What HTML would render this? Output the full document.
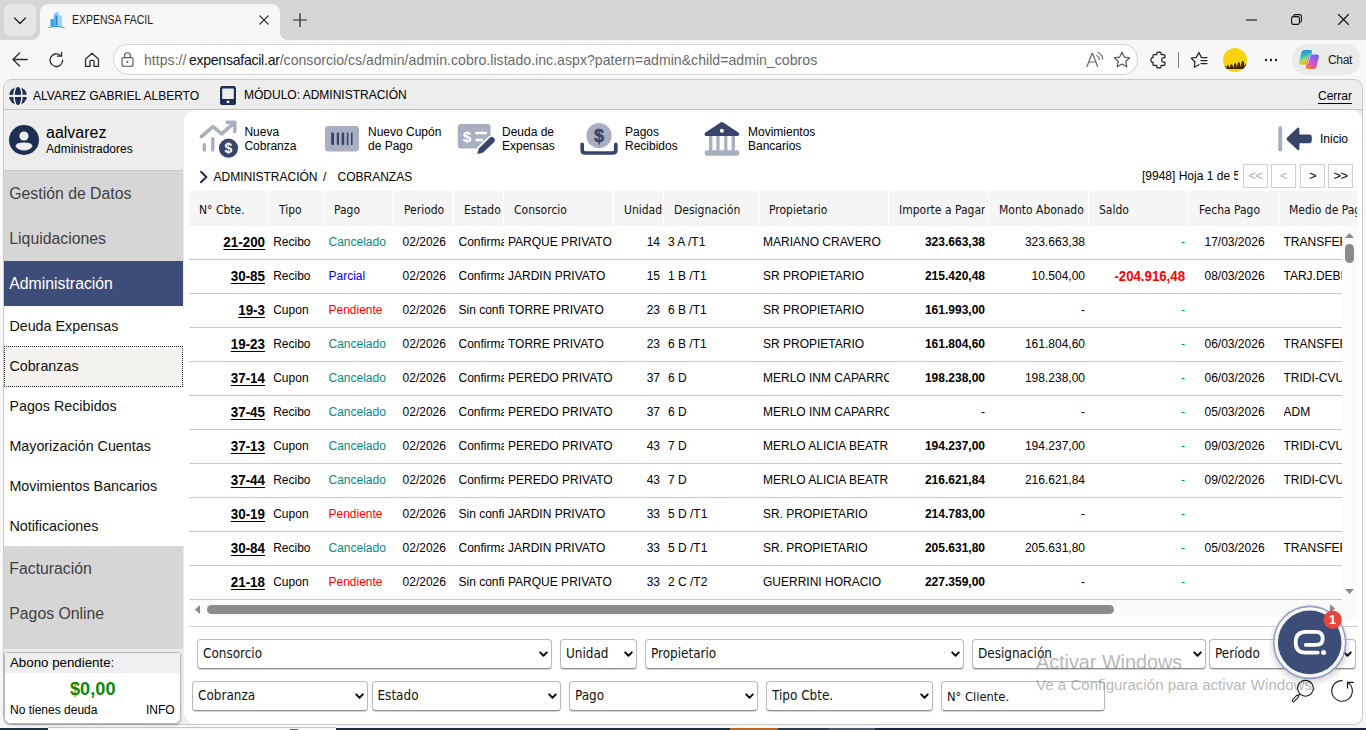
<!DOCTYPE html>
<html lang="es">
<head>
<meta charset="utf-8">
<title>EXPENSA FACIL</title>
<style>
*{box-sizing:border-box;margin:0;padding:0}
html,body{width:1366px;height:730px;overflow:hidden}
body{position:relative;background:#f7f7f7;font-family:"Liberation Sans",Arial,sans-serif;color:#000;font-size:12px}
.abs{position:absolute}
.t{position:absolute;white-space:nowrap;line-height:16px;height:16px}
svg{position:absolute;overflow:visible}
/* ---------- browser chrome ---------- */
#tabstrip{left:0;top:0;width:1366px;height:40px;background:#d5d5d5}
#tabdd{left:4px;top:4px;width:32px;height:32px;border-radius:7px;background:#e6e6e6}
#tab{left:40px;top:4px;width:240px;height:36px;border-radius:8px 8px 0 0;background:#f7f7f7}
#toolbar{left:0;top:40px;width:1366px;height:39px;background:#f7f7f7}
#addr{left:113px;top:44px;width:1025px;height:31px;border-radius:15px;background:#fff;border:1px solid #d4d4d4}
#chat{left:1292px;top:44px;width:68px;height:31px;border-radius:15px;background:#ebebeb}
/* ---------- page ---------- */
#page{left:3px;top:79px;width:1360px;height:646px;background:#ededed;border-radius:9px;border:1px solid #c9c9c9}
#hdr{left:4px;top:80px;width:1358px;height:30px;background:#ededed;border-bottom:1px solid #c2c2c2;border-radius:8px 8px 0 0}
#menu{left:4px;top:170px;width:179px;height:479px;background:#d6d6d6}
#main{left:184px;top:110px;width:1178px;height:614px;background:#fff;border-radius:12px 11px 9px 12px}
#taskbar{left:0;top:728px;width:1366px;height:2px;background:#1a2740}

.m1{font-size:15.8px;color:#3f3f3f;line-height:18px;height:18px}
.m2{font-size:14.3px;color:#111;line-height:18px;height:18px}

.tb{font-size:12px;line-height:14px;height:28px}
.pg{position:absolute;top:164px;width:25px;height:24px;border:1px solid #cfcfcf;background:#fff;text-align:center;font-size:13px;line-height:22px;letter-spacing:-0.5px}

.th{font-size:12px;color:#111;font-family:"DejaVu Sans Condensed","DejaVu Sans",sans-serif;font-stretch:condensed}
.td{font-size:12px}
.b{font-weight:bold}
.nc{font-size:14px;font-weight:bold;transform:scaleX(0.955);transform-origin:100% 50%}
.nc u{text-underline-offset:2px;text-decoration-thickness:1.1px}
.sr{font-size:14px;font-weight:bold;color:#ff0000;transform:scaleX(0.945);transform-origin:100% 50%}
.ln{left:189px;width:1153px;height:1px;background:#c9c9c9}

.sel{position:absolute;height:30px;background:#fff;border:1px solid #b9b9b9;border-bottom-color:#8f8f8f;border-radius:4px;box-shadow:0 1px 1px rgba(0,0,0,.18);font-size:13.4px;line-height:28px;padding-left:5px;white-space:nowrap;color:#111;font-family:"DejaVu Sans Condensed","DejaVu Sans",sans-serif;font-stretch:condensed}
</style>
</head>
<body>
<!-- BROWSER CHROME -->
<div id="tabstrip" class="abs"></div>
<div id="tabdd" class="abs"></div>
<div id="tab" class="abs"></div>
<div class="abs" style="left:32px;top:32px;width:8px;height:8px;background:radial-gradient(circle at 0 0,rgba(247,247,247,0) 7.5px,#f7f7f7 8.5px)"></div><div class="abs" style="left:280px;top:32px;width:8px;height:8px;background:radial-gradient(circle at 100% 0,rgba(247,247,247,0) 7.5px,#f7f7f7 8.5px)"></div>
<div id="toolbar" class="abs"></div>
<div id="addr" class="abs"></div>
<div id="chat" class="abs"></div>

<!-- tab dropdown chevron -->
<svg style="left:13px;top:16px" width="14" height="10" viewBox="0 0 14 10"><path d="M1.5 2 L7 7.5 L12.5 2" fill="none" stroke="#222" stroke-width="1.3" stroke-linecap="round" stroke-linejoin="round"/></svg>
<!-- favicon -->
<svg style="left:48px;top:11px" width="17" height="18" viewBox="0 0 17 18">
<rect x="2.5" y="8" width="3.5" height="7.5" fill="#3aa7e6"/><rect x="6" y="3" width="4.5" height="12.5" fill="#5bbcf0"/><rect x="7.3" y="1" width="3.2" height="3" fill="#8fd0f5"/><rect x="10.5" y="4.5" width="3.5" height="11" fill="#9ad6f7"/><rect x="7.8" y="5" width="1" height="9" fill="#1f78c1"/>
<path d="M0.5 16.3 Q8.5 13.8 16.5 16.3 L16.5 17 Q8.5 15 0.5 17Z" fill="#2d8fd6"/></svg>
<div class="t" style="left:72px;top:12px;font-size:13px;transform:scaleX(0.807);transform-origin:0 50%;color:#1b1b1b" id="tabtitle">EXPENSA FACIL</div>
<svg style="left:259px;top:15px" width="10" height="10" viewBox="0 0 10 10"><path d="M0.8 0.8 L9.2 9.2 M9.2 0.8 L0.8 9.2" stroke="#222" stroke-width="1.2" stroke-linecap="round"/></svg>
<svg style="left:293px;top:13px" width="14" height="14" viewBox="0 0 14 14"><path d="M7 0.5 V13.5 M0.5 7 H13.5" stroke="#222" stroke-width="1.2" stroke-linecap="round"/></svg>
<!-- window controls -->
<svg style="left:1246px;top:19px" width="11" height="2" viewBox="0 0 11 2"><path d="M0 1 H11" stroke="#111" stroke-width="1.1"/></svg>
<svg style="left:1291px;top:14px" width="11" height="11" viewBox="0 0 11 11"><rect x="0.6" y="2.6" width="7.8" height="7.8" rx="1.6" fill="none" stroke="#111" stroke-width="1.1"/><path d="M2.8 2.4 V2 Q2.8 0.6 4.2 0.6 H8.4 Q10.4 0.6 10.4 2.6 V6.8 Q10.4 8.2 9 8.2 H8.6" fill="none" stroke="#111" stroke-width="1.1"/></svg>
<svg style="left:1338px;top:14px" width="11" height="11" viewBox="0 0 11 11"><path d="M0.5 0.5 L10.5 10.5 M10.5 0.5 L0.5 10.5" stroke="#111" stroke-width="1.1" stroke-linecap="round"/></svg>
<!-- nav: back, reload, home -->
<svg style="left:12px;top:52px" width="16" height="15" viewBox="0 0 16 15"><path d="M15.3 7.5 H1.2 M7.6 1 L1 7.5 L7.6 14" fill="none" stroke="#2b2b2b" stroke-width="1.3" stroke-linecap="round" stroke-linejoin="round"/></svg>
<svg style="left:49px;top:52px" width="15" height="16" viewBox="0 0 15 16"><path d="M13.6 8.2 A6.3 6.3 0 1 1 11.4 3.4" fill="none" stroke="#2b2b2b" stroke-width="1.3" stroke-linecap="round"/><path d="M8.4 3.6 H12.6 V-0.2" transform="translate(0,0.6)" fill="none" stroke="#2b2b2b" stroke-width="1.3" stroke-linecap="round" stroke-linejoin="round"/></svg>
<svg style="left:84px;top:52px" width="16" height="16" viewBox="0 0 16 16"><path d="M1.5 7.2 L8 1.2 L14.5 7.2 V14.3 H10 V9.3 Q10 8.3 9 8.3 H7 Q6 8.3 6 9.3 V14.3 H1.5 Z" fill="none" stroke="#2b2b2b" stroke-width="1.3" stroke-linejoin="round"/></svg>
<!-- lock -->
<svg style="left:121px;top:52px" width="13" height="15" viewBox="0 0 13 15"><rect x="1" y="5.6" width="11" height="8.6" rx="2" fill="none" stroke="#555" stroke-width="1.1"/><path d="M3.6 5.6 V3.6 Q3.6 0.8 6.5 0.8 Q9.4 0.8 9.4 3.6 V5.6" fill="none" stroke="#555" stroke-width="1.1"/><circle cx="6.5" cy="9.9" r="1" fill="#555"/></svg>
<div class="t" style="left:144px;top:52px;font-size:14.1px;letter-spacing:0.022px;color:#6a6a6a" id="url">https://<span style="color:#111;margin-left:2.4px;letter-spacing:-0.27px">expensafacil.ar</span>/consorcio/cs/admin/admin.cobro.listado.inc.aspx?patern=admin&amp;child=admin_cobros</div>
<!-- read aloud -->
<svg style="left:1086px;top:51px" width="18" height="17" viewBox="0 0 18 17"><path d="M1 15.5 L6 2.5 H6.6 L11.6 15.5 M2.8 11 H9.8" fill="none" stroke="#666" stroke-width="1.2" stroke-linejoin="round" stroke-linecap="round"/><path d="M10.6 4.6 Q13 5.6 13.6 8.6 M12 1.6 Q16 3.4 16.8 8.2" fill="none" stroke="#666" stroke-width="1.1" stroke-linecap="round"/></svg>
<!-- star -->
<svg style="left:1113px;top:51px" width="18" height="17" viewBox="0 0 18 17"><path d="M9 1.2 L11.3 6.1 L16.7 6.8 L12.7 10.5 L13.8 15.8 L9 13.1 L4.2 15.8 L5.3 10.5 L1.3 6.8 L6.7 6.1 Z" fill="none" stroke="#555" stroke-width="1.2" stroke-linejoin="round"/></svg>
<!-- extensions puzzle -->
<svg style="left:1148px;top:50px" width="20" height="20" viewBox="1148 50 20 20"><path d="M1153.9 54.7 H1156.7 Q1155.9 52.1 1158.9 52.1 Q1161.9 52.1 1161.1 54.7 H1164 Q1164.9 54.7 1164.9 55.6 V57.7 Q1161.7 57.1 1161.7 59.9 Q1161.7 62.7 1164.9 62.1 V64.4 Q1164.9 65.3 1164 65.3 H1161.1 Q1161.9 67.9 1158.9 67.9 Q1155.9 67.9 1156.7 65.3 H1153.9 Q1153 65.3 1153 64.4 V62.1 Q1150.9 62.8 1150.9 59.9 Q1150.9 57 1153 57.7 V55.6 Q1153 54.7 1153.9 54.7Z" fill="none" stroke="#222" stroke-width="1.25" stroke-linejoin="round"/></svg>
<div class="abs" style="left:1178px;top:52px;width:1px;height:16px;background:#7c7c7c"></div>
<!-- favorites -->
<svg style="left:1188px;top:50px" width="22" height="20" viewBox="1188 50 22 20"><path d="M1201.4 57.5 L1198.9 52.5 L1196.3 57.4 L1191.3 58.2 L1195 62 L1194.2 67.2 L1199 64.7" fill="none" stroke="#222" stroke-width="1.25" stroke-linejoin="round" stroke-linecap="round"/><path d="M1201.6 57.5 H1207 M1201 60.5 H1207 M1201 63.5 H1207" stroke="#222" stroke-width="1.25" stroke-linecap="round"/></svg>
<!-- avatar -->
<div class="abs" style="left:1223px;top:48px;width:24px;height:24px;border-radius:12px;background:#f8d410;overflow:hidden"><div class="abs" style="left:1px;top:12px;width:22px;height:9px;background:#3c2606;clip-path:polygon(0 75%,6% 60%,10% 85%,16% 55%,22% 60%,26% 90%,32% 45%,38% 50%,42% 88%,48% 35%,55% 40%,58% 85%,64% 25%,72% 30%,75% 80%,82% 10%,90% 15%,92% 70%,100% 30%,100% 100%,0 100%)"></div></div>
<!-- dots -->
<svg style="left:1264px;top:58px" width="14" height="4" viewBox="0 0 14 4"><circle cx="2" cy="2" r="1.2" fill="#222"/><circle cx="7" cy="2" r="1.2" fill="#222"/><circle cx="12" cy="2" r="1.2" fill="#222"/></svg>
<!-- copilot -->
<svg style="left:1298px;top:49px" width="22" height="21" viewBox="0 0 22 21"><defs><linearGradient id="cp1" x1="0" y1="0" x2="0.3" y2="1"><stop offset="0" stop-color="#2a6fe0"/><stop offset="0.45" stop-color="#2fc0c8"/><stop offset="0.8" stop-color="#c6d84a"/><stop offset="1" stop-color="#f6a623"/></linearGradient><linearGradient id="cp2" x1="0.7" y1="0" x2="0.2" y2="1"><stop offset="0" stop-color="#5b6ff2"/><stop offset="0.45" stop-color="#c252e0"/><stop offset="0.8" stop-color="#f2607a"/><stop offset="1" stop-color="#f58a2e"/></linearGradient></defs>
<path d="M6.6 1 H12.4 Q14.6 1 14 3.2 L11.6 12.4 Q10.8 15.6 7.6 15.6 H3.4 Q0.6 15.6 1.2 12.8 L3.4 3.6 Q4 1 6.6 1Z" fill="url(#cp1)"/><path d="M14.4 5.4 H18.6 Q21.4 5.4 20.8 8.2 L18.6 17.4 Q18 20 15.4 20 H9.6 Q7.4 20 8 17.8 L10.4 8.6 Q11.2 5.4 14.4 5.4Z" fill="url(#cp2)"/><path d="M12.6 6 L10.1 15 L9.4 15 L11.9 6Z" fill="#fff" fill-opacity=".9"/></svg>
<div class="t" style="left:1328px;top:52px;font-size:12px;letter-spacing:-0.3px;color:#222" id="chattxt">Chat</div>

<!-- PAGE -->
<div id="page" class="abs"></div>
<div id="hdr" class="abs"></div>
<div id="menu" class="abs"></div>
<div class="abs" style="left:4px;top:170px;width:179px;height:1px;background:#c9c9c9"></div>
<div id="main" class="abs"></div>
<div id="taskbar" class="abs"></div>
<div class="abs" style="left:0;top:728px;width:48px;height:2px;background:#1d3340"></div><div class="abs" style="left:336px;top:728px;width:394px;height:2px;background:#1b2f3a"></div><div class="abs" style="left:48px;top:727px;width:288px;height:3px;background:#f9f9f9;border-top:1px solid #c4c4c4"></div><div class="abs" style="left:290px;top:729px;width:8px;height:1px;background:#6b4a66"></div><div class="abs" style="left:730px;top:728px;width:48px;height:2px;background:#b96a2a"></div><div class="abs" style="left:778px;top:728px;width:51px;height:2px;background:#2d3a4c"></div><div class="abs" style="left:829px;top:728px;width:46px;height:2px;background:#4d5866"></div>

<!-- header bar -->
<svg style="left:9px;top:87px" width="18" height="18" viewBox="0 0 18 18"><circle cx="9" cy="8.9" r="9" fill="#1f2d50"/><path d="M-1 8.9 H19" stroke="#ededed" stroke-width="2.2"/><ellipse cx="9" cy="8.9" rx="4" ry="10.4" fill="none" stroke="#ededed" stroke-width="1.5"/></svg>
<div class="t" style="left:33px;top:88px;font-size:12px" id="uname">ALVAREZ GABRIEL ALBERTO</div>
<svg style="left:220px;top:86px" width="16" height="19" viewBox="0 0 16 19"><rect x="0" y="0" width="16" height="19" rx="2.6" fill="#1f2d50"/><rect x="2.2" y="2.4" width="11.6" height="10.6" rx="0.5" fill="#ededed"/><rect x="6.7" y="14.7" width="2.6" height="2.4" fill="#ededed"/></svg>
<div class="t" style="left:244px;top:87px;font-size:12px" id="modulo">MÓDULO: ADMINISTRACIÓN</div>
<div class="t" style="left:1318px;top:88px;font-size:12px;text-decoration:underline;text-underline-offset:2.5px" id="cerrar">Cerrar</div>
<!-- user panel -->
<svg style="left:9px;top:125px" width="30" height="30" viewBox="0 0 30 30"><circle cx="15" cy="15" r="15" fill="#1f2d50"/><circle cx="15" cy="11" r="4.6" fill="#ededed"/><path d="M6.5 21.6 Q6.5 17.6 15 17.6 Q23.5 17.6 23.5 21.6 Q20.5 25.6 15 25.6 Q9.5 25.6 6.5 21.6Z" fill="#ededed"/></svg>
<div class="t" style="left:46px;top:125px;font-size:16px" id="uid">aalvarez</div>
<div class="t" style="left:46px;top:141px;font-size:12px" id="urole">Administradores</div>
<!-- menu -->
<div class="t m1" style="left:9.3px;top:185px">Gestión de Datos</div>
<div class="t m1" style="left:9.3px;top:230px">Liquidaciones</div>
<div class="abs" style="left:4px;top:261px;width:179px;height:45px;background:#3b4d78"></div>
<div class="t m1" style="left:9.3px;top:275px;color:#fff">Administración</div>
<div class="abs" style="left:4px;top:306px;width:180px;height:240px;background:#fff"></div>
<div class="abs" style="left:4px;top:346px;width:179px;height:41px;background:#f3f2ef;border:1px dotted #222"></div>
<div class="t m2" style="left:9.4px;top:317px">Deuda Expensas</div>
<div class="t m2" style="left:9.4px;top:357px">Cobranzas</div>
<div class="t m2" style="left:9.4px;top:397px">Pagos Recibidos</div>
<div class="t m2" style="left:9.4px;top:437px">Mayorización Cuentas</div>
<div class="t m2" style="left:9.4px;top:477px">Movimientos Bancarios</div>
<div class="t m2" style="left:9.4px;top:517px">Notificaciones</div>
<div class="t m1" style="left:9.3px;top:560px">Facturación</div>
<div class="t m1" style="left:9.3px;top:605px">Pagos Online</div>
<!-- abono box -->
<div class="abs" style="left:4px;top:652px;width:177px;height:72px;background:#fff;border:1px solid #b9b9b9;border-radius:3px 3px 6px 6px;box-shadow:0 1px 2px rgba(0,0,0,.25)"></div>
<div class="abs" style="left:5px;top:653px;width:175px;height:20px;background:#efefef"></div>
<div class="t" style="left:10px;top:655px;font-size:13.3px" id="abono">Abono pendiente:</div>
<div class="t" style="left:70px;top:680px;font-size:18.2px;font-weight:bold;color:#0a8a0a;line-height:18px;height:18px" id="monto">$0,00</div>
<div class="t" style="left:10px;top:702px;font-size:12px" id="nodeuda">No tienes deuda</div>
<div class="t" style="left:146px;top:702px;font-size:12px" id="info">INFO</div>

<!-- toolbar icons -->
<svg style="left:198px;top:118px" width="42" height="42" viewBox="198 118 42 42">
<path d="M201.4 136.6 L213 126.6 L221.6 133.8 L233.6 123.4" fill="none" stroke="#a9afc1" stroke-width="3.6" stroke-linecap="round" stroke-linejoin="round"/>
<path d="M227 122.2 H234.8 V131.6" fill="none" stroke="#a9afc1" stroke-width="3.6" stroke-linecap="round" stroke-linejoin="round"/>
<path d="M204.3 144.8 V150 M212.8 138.6 V150" stroke="#a9afc1" stroke-width="3.4" stroke-linecap="round"/>
<circle cx="228.5" cy="148.2" r="9.6" fill="#38456a"/>
<text x="228.5" y="153.2" text-anchor="middle" font-family="Liberation Sans,Arial,sans-serif" font-weight="bold" font-size="14" fill="#fff">$</text>
</svg>
<div class="t tb" style="left:244.4px;top:125px">Nueva<br>Cobranza</div>
<svg style="left:325px;top:126px" width="34" height="26" viewBox="0 0 34 26"><rect x="0" y="0" width="34" height="25.4" rx="3.4" fill="#a9afc1"/>
<rect x="6.2" y="6.6" width="2.8" height="12.4" rx="0.8" fill="#38456a"/><rect x="11.8" y="6.6" width="2.2" height="12.4" rx="0.8" fill="#38456a"/><rect x="16.6" y="6.6" width="2.6" height="12.4" rx="0.8" fill="#38456a"/><rect x="21.8" y="6.6" width="1.6" height="12.4" rx="0.6" fill="#38456a"/><rect x="26" y="6.6" width="1.6" height="12.4" rx="0.6" fill="#38456a"/></svg>
<div class="t tb" style="left:368px;top:125px">Nuevo Cupón<br>de Pago</div>
<svg style="left:457px;top:122px" width="40" height="36" viewBox="457 122 40 36">
<rect x="457.8" y="124.1" width="32.8" height="24.4" rx="3" fill="#a9afc1"/>
<text x="467" y="142.4" text-anchor="middle" font-family="Liberation Sans,Arial,sans-serif" font-weight="bold" font-size="15.5" fill="#fff">$</text>
<path d="M476.4 133 H486 M476.4 140 H482" stroke="#fff" stroke-width="2.4" stroke-linecap="round"/>
<g transform="translate(476.5,154.8) rotate(-44)"><path d="M-0.6 0 L6 -3.9 H21 Q25 -3.9 25 -0.4 V0.4 Q25 3.9 21 3.9 H6 Z" fill="#38456a" stroke="#fff" stroke-width="1.7" stroke-linejoin="round"/></g>
</svg>
<div class="t tb" style="left:502px;top:125px">Deuda de<br>Expensas</div>
<svg style="left:578px;top:120px" width="42" height="38" viewBox="578 120 42 38">
<circle cx="599" cy="135.7" r="12.6" fill="#a9afc1"/>
<text x="599" y="142.4" text-anchor="middle" font-family="Liberation Sans,Arial,sans-serif" font-weight="bold" font-size="18" fill="#38456a" stroke="#38456a" stroke-width="0.5">$</text>
<path d="M582.2 144.4 V150 Q582.2 153 585.2 153 H612.8 Q615.8 153 615.8 150 V144.4" fill="none" stroke="#38456a" stroke-width="3.7" stroke-linecap="round" stroke-linejoin="round"/>
</svg>
<div class="t tb" style="left:625px;top:125px">Pagos<br>Recibidos</div>
<svg style="left:703px;top:120px" width="38" height="38" viewBox="703 120 38 38">
<path d="M709 136 h3.4 v15 h-3.4z M716.4 136 h3.2 v15 h-3.2z M724.2 136 h3.2 v15 h-3.2z M731.6 136 h3.4 v15 h-3.4z" fill="#a9afc1"/>
<rect x="704.8" y="150.2" width="34.4" height="5.6" rx="2" fill="#a9afc1"/>
<path d="M720.6 122.4 Q721.9 121.4 723.2 122.4 L738.4 132.4 Q739.4 133.2 739.2 134.4 Q739 136 737.4 136 H706.4 Q704.8 136 704.6 134.4 Q704.4 133.2 705.4 132.4 Z" fill="#38456a"/>
<circle cx="721.9" cy="130.7" r="2" fill="#fff"/>
</svg>
<div class="t tb" style="left:748px;top:125px">Movimientos<br>Bancarios</div>
<svg style="left:1276px;top:124px" width="38" height="30" viewBox="1276 124 38 30">
<rect x="1278.2" y="126.2" width="4" height="25.2" rx="1.6" fill="#a9afc1"/>
<path d="M1287.2 137.4 L1297 128.2 Q1299.4 126.2 1299.4 129.2 V134.4 H1309.4 Q1311.8 134.4 1311.8 136.8 V140.8 Q1311.8 143.2 1309.4 143.2 H1299.4 V148.6 Q1299.4 151.6 1297 149.6 L1287.2 140.2 Q1285.8 138.8 1287.2 137.4Z" fill="#38456a"/>
</svg>
<div class="t" style="left:1320px;top:131px;font-size:12px" id="inicio">Inicio</div>
<!-- breadcrumb -->
<svg style="left:199px;top:170px" width="10" height="14" viewBox="0 0 10 14"><path d="M2 1.8 L7.4 7 L2 12.2" fill="none" stroke="#1f2d50" stroke-width="2" stroke-linecap="round" stroke-linejoin="round"/></svg>
<div class="t" style="left:213.5px;top:169px;font-size:12px" id="bc1">ADMINISTRACIÓN</div>
<div class="t" style="left:323px;top:169px;font-size:12px" id="bc2">/</div>
<div class="t" style="left:337.5px;top:169px;font-size:12px" id="bc3">COBRANZAS</div>
<div class="t" style="left:1142px;top:168px;font-size:12px;width:96px;overflow:hidden" id="hoja">[9948] Hoja 1 de 52</div>
<div class="pg" style="left:1243px;color:#b0b0b0">&lt;&lt;</div><div class="pg" style="left:1271px;color:#b0b0b0">&lt;</div><div class="pg" style="left:1300px">&gt;</div><div class="pg" style="left:1328px">&gt;&gt;</div>
<div class="abs" style="left:189px;top:191px;width:1168px;height:35px;background:#f5f5f5"></div>
<div class="t th" style="left:199px;top:202px;max-width:70px;overflow:hidden">N° Cbte.</div>
<div class="abs" style="left:267.6px;top:191px;width:1.6px;height:35px;background:#fff"></div><div class="t th" style="left:279px;top:202px;max-width:45px;overflow:hidden">Tipo</div>
<div class="abs" style="left:322.6px;top:191px;width:1.6px;height:35px;background:#fff"></div><div class="t th" style="left:334px;top:202px;max-width:60px;overflow:hidden">Pago</div>
<div class="abs" style="left:392.6px;top:191px;width:1.6px;height:35px;background:#fff"></div><div class="t th" style="left:404px;top:202px;max-width:50px;overflow:hidden">Periodo</div>
<div class="abs" style="left:452.6px;top:191px;width:1.6px;height:35px;background:#fff"></div><div class="t th" style="left:464px;top:202px;max-width:40px;overflow:hidden">Estado</div>
<div class="abs" style="left:502.6px;top:191px;width:1.6px;height:35px;background:#fff"></div><div class="t th" style="left:514px;top:202px;max-width:100px;overflow:hidden">Consorcio</div>
<div class="abs" style="left:612.6px;top:191px;width:1.6px;height:35px;background:#fff"></div><div class="t th" style="left:624px;top:202px;max-width:40px;overflow:hidden">Unidad</div>
<div class="abs" style="left:662.6px;top:191px;width:1.6px;height:35px;background:#fff"></div><div class="t th" style="left:674px;top:202px;max-width:85px;overflow:hidden">Designación</div>
<div class="abs" style="left:757.6px;top:191px;width:1.6px;height:35px;background:#fff"></div><div class="t th" style="left:769px;top:202px;max-width:120px;overflow:hidden">Propietario</div>
<div class="abs" style="left:887.6px;top:191px;width:1.6px;height:35px;background:#fff"></div><div class="t th" style="left:899px;top:202px;max-width:90px;overflow:hidden">Importe a Pagar</div>
<div class="abs" style="left:987.6px;top:191px;width:1.6px;height:35px;background:#fff"></div><div class="t th" style="left:999px;top:202px;max-width:90px;overflow:hidden">Monto Abonado</div>
<div class="abs" style="left:1087.6px;top:191px;width:1.6px;height:35px;background:#fff"></div><div class="t th" style="left:1099px;top:202px;max-width:90px;overflow:hidden">Saldo</div>
<div class="abs" style="left:1187.6px;top:191px;width:1.6px;height:35px;background:#fff"></div><div class="t th" style="left:1199px;top:202px;max-width:80px;overflow:hidden">Fecha Pago</div>
<div class="abs" style="left:1277.6px;top:191px;width:1.6px;height:35px;background:#fff"></div><div class="t th" style="left:1289px;top:202px;max-width:68px;overflow:hidden">Medio de Pago</div>
<div class="abs ln" style="top:259px"></div>
<div class="t nc" style="top:234px;left:189px;width:76px;text-align:right"><u>21-200</u></div><div class="t td" style="top:234px;left:273.2px">Recibo</div><div class="t td" style="top:234px;left:328.5px;color:#008b8b">Cancelado</div><div class="t td" style="top:234px;left:402.6px">02/2026</div><div class="t td" style="top:234px;left:458.5px;width:45px;overflow:hidden">Confirmado</div><div class="t td" style="top:234px;left:508px;width:105px;overflow:hidden">PARQUE PRIVATO</div><div class="t td" style="top:234px;left:614px;width:46px;text-align:right">14</div><div class="t td" style="top:234px;left:668px">3 A /T1</div><div class="t td" style="top:234px;left:763px;width:125.5px;overflow:hidden">MARIANO CRAVERO</div><div class="t td b" style="top:234px;left:889px;width:96px;text-align:right">323.663,38</div><div class="t td" style="top:234px;left:989px;width:96px;text-align:right">323.663,38</div><div class="t td" style="top:234px;left:1089px;width:96px;text-align:right;color:#008b8b">-</div><div class="t td" style="top:234px;left:1204.5px">17/03/2026</div><div class="t td" style="top:234px;left:1283.5px;width:58.5px;overflow:hidden">TRANSFERENCIA</div>
<div class="abs ln" style="top:293px"></div>
<div class="t nc" style="top:268px;left:189px;width:76px;text-align:right"><u>30-85</u></div><div class="t td" style="top:268px;left:273.2px">Recibo</div><div class="t td" style="top:268px;left:328.5px;color:#0000ff">Parcial</div><div class="t td" style="top:268px;left:402.6px">02/2026</div><div class="t td" style="top:268px;left:458.5px;width:45px;overflow:hidden">Confirmado</div><div class="t td" style="top:268px;left:508px;width:105px;overflow:hidden">JARDIN PRIVATO</div><div class="t td" style="top:268px;left:614px;width:46px;text-align:right">15</div><div class="t td" style="top:268px;left:668px">1 B /T1</div><div class="t td" style="top:268px;left:763px;width:125.5px;overflow:hidden">SR PROPIETARIO</div><div class="t td b" style="top:268px;left:889px;width:96px;text-align:right">215.420,48</div><div class="t td" style="top:268px;left:989px;width:96px;text-align:right">10.504,00</div><div class="t sr" style="top:268px;left:1089px;width:96px;text-align:right">-204.916,48</div><div class="t td" style="top:268px;left:1204.5px">08/03/2026</div><div class="t td" style="top:268px;left:1283.5px;width:58.5px;overflow:hidden">TARJ.DEBITO</div>
<div class="abs ln" style="top:327px"></div>
<div class="t nc" style="top:302px;left:189px;width:76px;text-align:right"><u>19-3</u></div><div class="t td" style="top:302px;left:273.2px">Cupon</div><div class="t td" style="top:302px;left:328.5px;color:#ff0000">Pendiente</div><div class="t td" style="top:302px;left:402.6px">02/2026</div><div class="t td" style="top:302px;left:458.5px;width:45px;overflow:hidden">Sin confirmar</div><div class="t td" style="top:302px;left:508px;width:105px;overflow:hidden">TORRE PRIVATO</div><div class="t td" style="top:302px;left:614px;width:46px;text-align:right">23</div><div class="t td" style="top:302px;left:668px">6 B /T1</div><div class="t td" style="top:302px;left:763px;width:125.5px;overflow:hidden">SR PROPIETARIO</div><div class="t td b" style="top:302px;left:889px;width:96px;text-align:right">161.993,00</div><div class="t td" style="top:302px;left:989px;width:96px;text-align:right">-</div><div class="t td" style="top:302px;left:1089px;width:96px;text-align:right;color:#008b8b">-</div>
<div class="abs ln" style="top:361px"></div>
<div class="t nc" style="top:336px;left:189px;width:76px;text-align:right"><u>19-23</u></div><div class="t td" style="top:336px;left:273.2px">Recibo</div><div class="t td" style="top:336px;left:328.5px;color:#008b8b">Cancelado</div><div class="t td" style="top:336px;left:402.6px">02/2026</div><div class="t td" style="top:336px;left:458.5px;width:45px;overflow:hidden">Confirmado</div><div class="t td" style="top:336px;left:508px;width:105px;overflow:hidden">TORRE PRIVATO</div><div class="t td" style="top:336px;left:614px;width:46px;text-align:right">23</div><div class="t td" style="top:336px;left:668px">6 B /T1</div><div class="t td" style="top:336px;left:763px;width:125.5px;overflow:hidden">SR PROPIETARIO</div><div class="t td b" style="top:336px;left:889px;width:96px;text-align:right">161.804,60</div><div class="t td" style="top:336px;left:989px;width:96px;text-align:right">161.804,60</div><div class="t td" style="top:336px;left:1089px;width:96px;text-align:right;color:#008b8b">-</div><div class="t td" style="top:336px;left:1204.5px">06/03/2026</div><div class="t td" style="top:336px;left:1283.5px;width:58.5px;overflow:hidden">TRANSFERENCIA</div>
<div class="abs ln" style="top:395px"></div>
<div class="t nc" style="top:370px;left:189px;width:76px;text-align:right"><u>37-14</u></div><div class="t td" style="top:370px;left:273.2px">Cupon</div><div class="t td" style="top:370px;left:328.5px;color:#008b8b">Cancelado</div><div class="t td" style="top:370px;left:402.6px">02/2026</div><div class="t td" style="top:370px;left:458.5px;width:45px;overflow:hidden">Confirmado</div><div class="t td" style="top:370px;left:508px;width:105px;overflow:hidden">PEREDO PRIVATO</div><div class="t td" style="top:370px;left:614px;width:46px;text-align:right">37</div><div class="t td" style="top:370px;left:668px">6 D</div><div class="t td" style="top:370px;left:763px;width:125.5px;overflow:hidden">MERLO INM CAPARROS</div><div class="t td b" style="top:370px;left:889px;width:96px;text-align:right">198.238,00</div><div class="t td" style="top:370px;left:989px;width:96px;text-align:right">198.238,00</div><div class="t td" style="top:370px;left:1089px;width:96px;text-align:right;color:#008b8b">-</div><div class="t td" style="top:370px;left:1204.5px">06/03/2026</div><div class="t td" style="top:370px;left:1283.5px;width:58.5px;overflow:hidden">TRIDI-CVU</div>
<div class="abs ln" style="top:429px"></div>
<div class="t nc" style="top:404px;left:189px;width:76px;text-align:right"><u>37-45</u></div><div class="t td" style="top:404px;left:273.2px">Recibo</div><div class="t td" style="top:404px;left:328.5px;color:#008b8b">Cancelado</div><div class="t td" style="top:404px;left:402.6px">02/2026</div><div class="t td" style="top:404px;left:458.5px;width:45px;overflow:hidden">Confirmado</div><div class="t td" style="top:404px;left:508px;width:105px;overflow:hidden">PEREDO PRIVATO</div><div class="t td" style="top:404px;left:614px;width:46px;text-align:right">37</div><div class="t td" style="top:404px;left:668px">6 D</div><div class="t td" style="top:404px;left:763px;width:125.5px;overflow:hidden">MERLO INM CAPARROS</div><div class="t td" style="top:404px;left:889px;width:96px;text-align:right">-</div><div class="t td" style="top:404px;left:989px;width:96px;text-align:right">-</div><div class="t td" style="top:404px;left:1089px;width:96px;text-align:right;color:#008b8b">-</div><div class="t td" style="top:404px;left:1204.5px">05/03/2026</div><div class="t td" style="top:404px;left:1283.5px;width:58.5px;overflow:hidden">ADM</div>
<div class="abs ln" style="top:463px"></div>
<div class="t nc" style="top:438px;left:189px;width:76px;text-align:right"><u>37-13</u></div><div class="t td" style="top:438px;left:273.2px">Cupon</div><div class="t td" style="top:438px;left:328.5px;color:#008b8b">Cancelado</div><div class="t td" style="top:438px;left:402.6px">02/2026</div><div class="t td" style="top:438px;left:458.5px;width:45px;overflow:hidden">Confirmado</div><div class="t td" style="top:438px;left:508px;width:105px;overflow:hidden">PEREDO PRIVATO</div><div class="t td" style="top:438px;left:614px;width:46px;text-align:right">43</div><div class="t td" style="top:438px;left:668px">7 D</div><div class="t td" style="top:438px;left:763px;width:125.5px;overflow:hidden">MERLO ALICIA BEATRIZ</div><div class="t td b" style="top:438px;left:889px;width:96px;text-align:right">194.237,00</div><div class="t td" style="top:438px;left:989px;width:96px;text-align:right">194.237,00</div><div class="t td" style="top:438px;left:1089px;width:96px;text-align:right;color:#008b8b">-</div><div class="t td" style="top:438px;left:1204.5px">09/03/2026</div><div class="t td" style="top:438px;left:1283.5px;width:58.5px;overflow:hidden">TRIDI-CVU</div>
<div class="abs ln" style="top:497px"></div>
<div class="t nc" style="top:472px;left:189px;width:76px;text-align:right"><u>37-44</u></div><div class="t td" style="top:472px;left:273.2px">Recibo</div><div class="t td" style="top:472px;left:328.5px;color:#008b8b">Cancelado</div><div class="t td" style="top:472px;left:402.6px">02/2026</div><div class="t td" style="top:472px;left:458.5px;width:45px;overflow:hidden">Confirmado</div><div class="t td" style="top:472px;left:508px;width:105px;overflow:hidden">PEREDO PRIVATO</div><div class="t td" style="top:472px;left:614px;width:46px;text-align:right">43</div><div class="t td" style="top:472px;left:668px">7 D</div><div class="t td" style="top:472px;left:763px;width:125.5px;overflow:hidden">MERLO ALICIA BEATRIZ</div><div class="t td b" style="top:472px;left:889px;width:96px;text-align:right">216.621,84</div><div class="t td" style="top:472px;left:989px;width:96px;text-align:right">216.621,84</div><div class="t td" style="top:472px;left:1089px;width:96px;text-align:right;color:#008b8b">-</div><div class="t td" style="top:472px;left:1204.5px">09/02/2026</div><div class="t td" style="top:472px;left:1283.5px;width:58.5px;overflow:hidden">TRIDI-CVU</div>
<div class="abs ln" style="top:531px"></div>
<div class="t nc" style="top:506px;left:189px;width:76px;text-align:right"><u>30-19</u></div><div class="t td" style="top:506px;left:273.2px">Cupon</div><div class="t td" style="top:506px;left:328.5px;color:#ff0000">Pendiente</div><div class="t td" style="top:506px;left:402.6px">02/2026</div><div class="t td" style="top:506px;left:458.5px;width:45px;overflow:hidden">Sin confirmar</div><div class="t td" style="top:506px;left:508px;width:105px;overflow:hidden">JARDIN PRIVATO</div><div class="t td" style="top:506px;left:614px;width:46px;text-align:right">33</div><div class="t td" style="top:506px;left:668px">5 D /T1</div><div class="t td" style="top:506px;left:763px;width:125.5px;overflow:hidden">SR. PROPIETARIO</div><div class="t td b" style="top:506px;left:889px;width:96px;text-align:right">214.783,00</div><div class="t td" style="top:506px;left:989px;width:96px;text-align:right">-</div><div class="t td" style="top:506px;left:1089px;width:96px;text-align:right;color:#008b8b">-</div>
<div class="abs ln" style="top:565px"></div>
<div class="t nc" style="top:540px;left:189px;width:76px;text-align:right"><u>30-84</u></div><div class="t td" style="top:540px;left:273.2px">Recibo</div><div class="t td" style="top:540px;left:328.5px;color:#008b8b">Cancelado</div><div class="t td" style="top:540px;left:402.6px">02/2026</div><div class="t td" style="top:540px;left:458.5px;width:45px;overflow:hidden">Confirmado</div><div class="t td" style="top:540px;left:508px;width:105px;overflow:hidden">JARDIN PRIVATO</div><div class="t td" style="top:540px;left:614px;width:46px;text-align:right">33</div><div class="t td" style="top:540px;left:668px">5 D /T1</div><div class="t td" style="top:540px;left:763px;width:125.5px;overflow:hidden">SR. PROPIETARIO</div><div class="t td b" style="top:540px;left:889px;width:96px;text-align:right">205.631,80</div><div class="t td" style="top:540px;left:989px;width:96px;text-align:right">205.631,80</div><div class="t td" style="top:540px;left:1089px;width:96px;text-align:right;color:#008b8b">-</div><div class="t td" style="top:540px;left:1204.5px">05/03/2026</div><div class="t td" style="top:540px;left:1283.5px;width:58.5px;overflow:hidden">TRANSFERENCIA</div>
<div class="abs ln" style="top:599px"></div>
<div class="t nc" style="top:574px;left:189px;width:76px;text-align:right"><u>21-18</u></div><div class="t td" style="top:574px;left:273.2px">Cupon</div><div class="t td" style="top:574px;left:328.5px;color:#ff0000">Pendiente</div><div class="t td" style="top:574px;left:402.6px">02/2026</div><div class="t td" style="top:574px;left:458.5px;width:45px;overflow:hidden">Sin confirmar</div><div class="t td" style="top:574px;left:508px;width:105px;overflow:hidden">PARQUE PRIVATO</div><div class="t td" style="top:574px;left:614px;width:46px;text-align:right">33</div><div class="t td" style="top:574px;left:668px">2 C /T2</div><div class="t td" style="top:574px;left:763px;width:125.5px;overflow:hidden">GUERRINI HORACIO</div><div class="t td b" style="top:574px;left:889px;width:96px;text-align:right">227.359,00</div><div class="t td" style="top:574px;left:989px;width:96px;text-align:right">-</div><div class="t td" style="top:574px;left:1089px;width:96px;text-align:right;color:#008b8b">-</div>
<div class="abs" style="left:1342px;top:226px;width:15px;height:394px;background:#fbfbfb"></div>
<svg style="left:1345px;top:233px" width="9" height="5" viewBox="0 0 9 5"><path d="M0 5 L4.5 0 L9 5Z" fill="#8b8b8b"/></svg>
<div class="abs" style="left:1345px;top:244px;width:9px;height:19px;border-radius:4.5px;background:#8b8b8b"></div>
<svg style="left:1345px;top:589px" width="9" height="5" viewBox="0 0 9 5"><path d="M0 0 L4.5 5 L9 0Z" fill="#8b8b8b"/></svg>
<div class="abs" style="left:189px;top:600px;width:1168px;height:17px;background:#fafafa"></div>
<svg style="left:195px;top:605px" width="5" height="9" viewBox="0 0 5 9"><path d="M5 0 L0 4.5 L5 9Z" fill="#8b8b8b"/></svg>
<div class="abs" style="left:207px;top:605px;width:907px;height:9px;border-radius:4.5px;background:#8b8b8b"></div>
<svg style="left:1330px;top:604px" width="5" height="9" viewBox="0 0 5 9"><path d="M0 0 L5 4.5 L0 9Z" fill="#8b8b8b"/></svg>
<div class="abs" style="left:189px;top:626px;width:1169px;height:1px;background:#cfcfcf"></div>
<div class="sel" style="left:197px;top:639px;width:355px">Consorcio<svg style="right:3.5px;top:10.5px" width="9" height="7" viewBox="0 0 9 7"><path d="M1.2 1.4 L4.5 4.8 L7.8 1.4" fill="none" stroke="#111" stroke-width="2" stroke-linecap="round" stroke-linejoin="round"/></svg></div>
<div class="sel" style="left:560px;top:639px;width:77px">Unidad<svg style="right:3.5px;top:10.5px" width="9" height="7" viewBox="0 0 9 7"><path d="M1.2 1.4 L4.5 4.8 L7.8 1.4" fill="none" stroke="#111" stroke-width="2" stroke-linecap="round" stroke-linejoin="round"/></svg></div>
<div class="sel" style="left:645px;top:639px;width:319px">Propietario<svg style="right:3.5px;top:10.5px" width="9" height="7" viewBox="0 0 9 7"><path d="M1.2 1.4 L4.5 4.8 L7.8 1.4" fill="none" stroke="#111" stroke-width="2" stroke-linecap="round" stroke-linejoin="round"/></svg></div>
<div class="sel" style="left:972px;top:639px;width:234px">Designación<svg style="right:3.5px;top:10.5px" width="9" height="7" viewBox="0 0 9 7"><path d="M1.2 1.4 L4.5 4.8 L7.8 1.4" fill="none" stroke="#111" stroke-width="2" stroke-linecap="round" stroke-linejoin="round"/></svg></div>
<div class="sel" style="left:1209px;top:639px;width:147px">Período<svg style="right:3.5px;top:10.5px" width="9" height="7" viewBox="0 0 9 7"><path d="M1.2 1.4 L4.5 4.8 L7.8 1.4" fill="none" stroke="#111" stroke-width="2" stroke-linecap="round" stroke-linejoin="round"/></svg></div>
<div class="sel" style="left:192px;top:681px;width:176px">Cobranza<svg style="right:3.5px;top:10.5px" width="9" height="7" viewBox="0 0 9 7"><path d="M1.2 1.4 L4.5 4.8 L7.8 1.4" fill="none" stroke="#111" stroke-width="2" stroke-linecap="round" stroke-linejoin="round"/></svg></div>
<div class="sel" style="left:371.5px;top:681px;width:189.5px">Estado<svg style="right:3.5px;top:10.5px" width="9" height="7" viewBox="0 0 9 7"><path d="M1.2 1.4 L4.5 4.8 L7.8 1.4" fill="none" stroke="#111" stroke-width="2" stroke-linecap="round" stroke-linejoin="round"/></svg></div>
<div class="sel" style="left:569px;top:681px;width:189px">Pago<svg style="right:3.5px;top:10.5px" width="9" height="7" viewBox="0 0 9 7"><path d="M1.2 1.4 L4.5 4.8 L7.8 1.4" fill="none" stroke="#111" stroke-width="2" stroke-linecap="round" stroke-linejoin="round"/></svg></div>
<div class="sel" style="left:766px;top:681px;width:167px">Tipo Cbte.<svg style="right:3.5px;top:10.5px" width="9" height="7" viewBox="0 0 9 7"><path d="M1.2 1.4 L4.5 4.8 L7.8 1.4" fill="none" stroke="#111" stroke-width="2" stroke-linecap="round" stroke-linejoin="round"/></svg></div>
<div class="sel" style="left:941px;top:681px;width:164px;padding-top:1px;font-size:12.8px">N° Cliente.</div>




<div class="t" style="left:1036px;top:649px;font-size:19.8px;line-height:26px;height:26px;color:rgba(120,120,120,.55)" id="aw1">Activar Windows</div>
<div class="t" style="left:1036px;top:676px;font-size:15.1px;line-height:18px;height:18px;color:rgba(120,120,120,.55)" id="aw2">Ve a Configuración para activar Windows.</div>
<!-- search -->
<svg style="left:1288px;top:676px" width="28" height="28" viewBox="1288 676 28 28"><circle cx="1305.5" cy="688.3" r="7.9" fill="none" stroke="#1a1a1a" stroke-width="1.1"/><path d="M1299.9 694 L1297.6 696.4" stroke="#1a1a1a" stroke-width="1.1"/><path d="M1297.4 696.4 L1293.4 700.6" stroke="#1a1a1a" stroke-width="3.4" stroke-linecap="round"/><path d="M1297.3 696.5 L1293.5 700.5" stroke="#fff" stroke-width="1.3" stroke-linecap="round"/></svg>
<!-- refresh -->
<svg style="left:1330px;top:676px" width="28" height="28" viewBox="1330 676 28 28"><path d="M1342.6 680.6 A10.3 10.3 0 1 0 1347.6 682.2" fill="none" stroke="#1a1a1a" stroke-width="1.1"/><path d="M1347.5 688.6 V682.3 H1353.9" fill="none" stroke="#1a1a1a" stroke-width="1.2"/></svg>
<!-- chat bubble -->
<svg style="left:1266px;top:598.6px" width="88" height="90" viewBox="1266 598 88 90">
<defs><radialGradient id="bsh" cx="0.5" cy="0.5" r="0.5"><stop offset="0.78" stop-color="#000" stop-opacity="0.16"/><stop offset="1" stop-color="#000" stop-opacity="0"/></radialGradient></defs>
<circle cx="1309.7" cy="644.4" r="42" fill="url(#bsh)"/>
<circle cx="1309.7" cy="641.4" r="36" fill="#fff" fill-opacity="0.8" stroke="#95a1bd" stroke-width="1.6"/>
<circle cx="1309.7" cy="641.4" r="31.8" fill="#3b4d78"/>
<path d="M1317.8 651.6 H1305.4 Q1295.7 651.6 1295.7 641.2 Q1295.7 630.8 1306 630.8 H1316 Q1322.7 630.8 1322.7 637.4 Q1322.7 643.9 1316 643.9 H1305.8" fill="none" stroke="#fff" stroke-width="3.8" stroke-linecap="round" stroke-linejoin="round"/>
<circle cx="1323.6" cy="651.4" r="2.5" fill="#fff"/>
<circle cx="1332.7" cy="618.7" r="9.2" fill="#e8453c"/>
<text x="1332.6" y="623.3" text-anchor="middle" font-family="Liberation Sans,Arial,sans-serif" font-weight="bold" font-size="12.5" fill="#fff">1</text>
</svg>

</body>
</html>
